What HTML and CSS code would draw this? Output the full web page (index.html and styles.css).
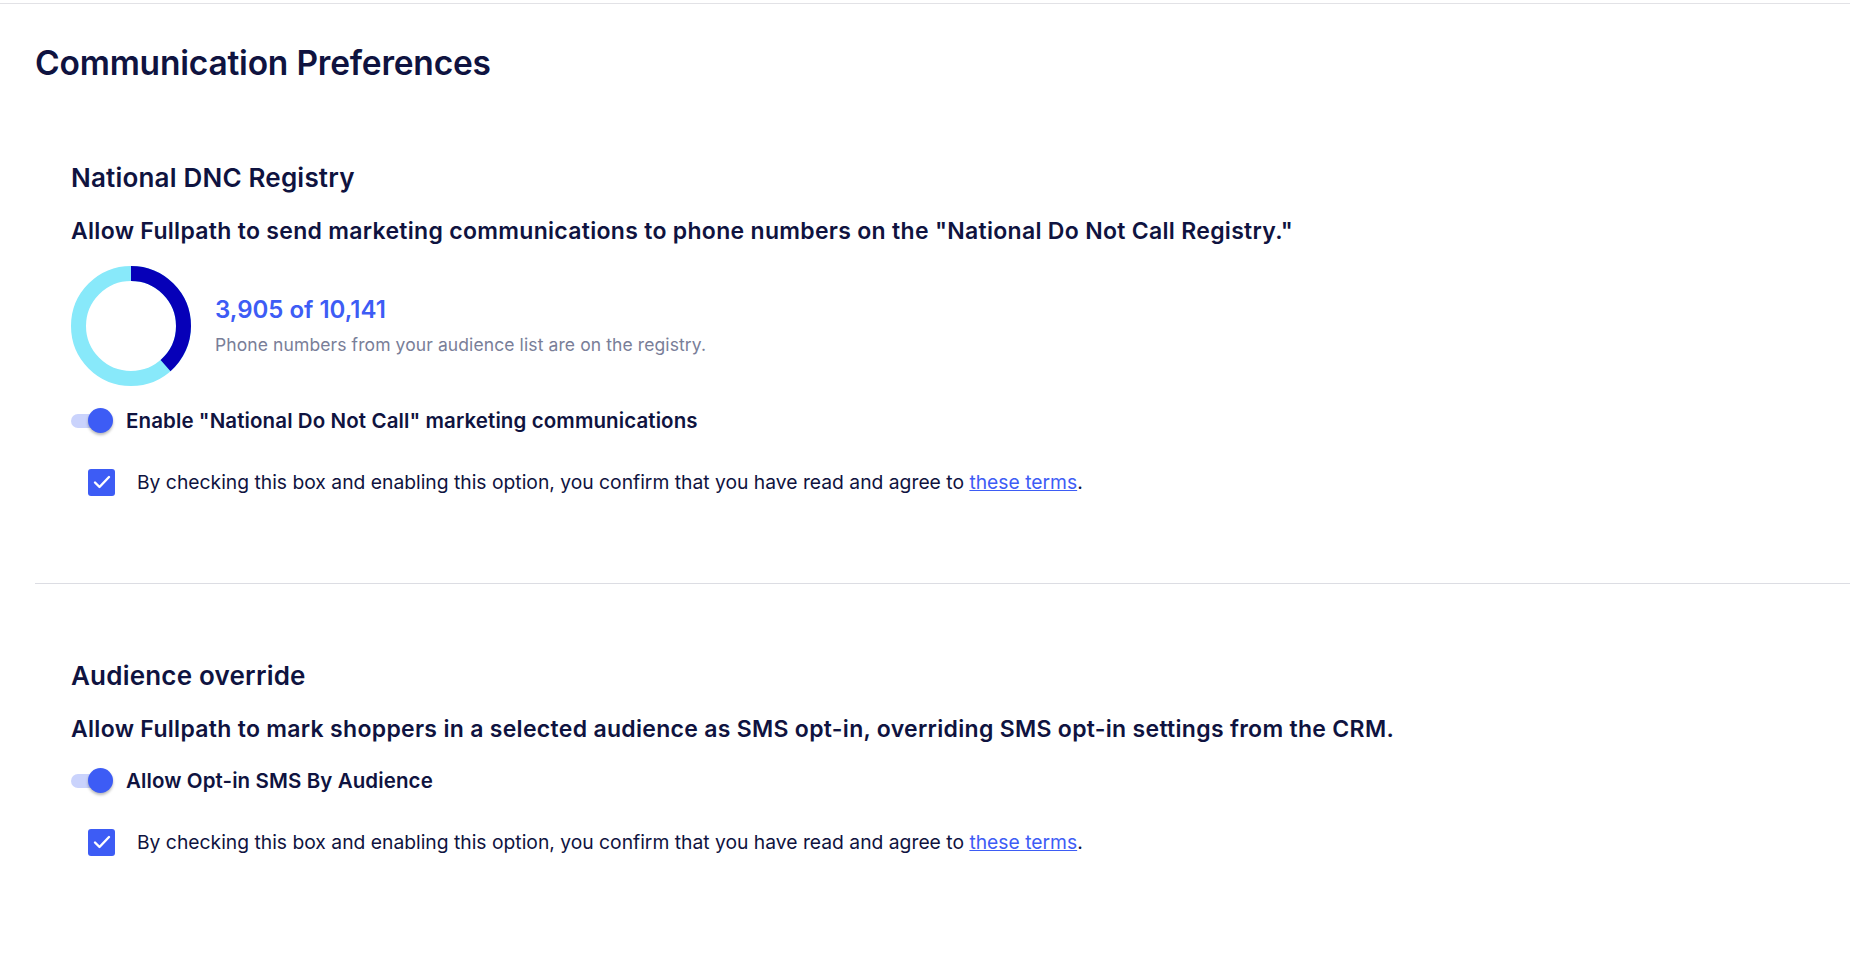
FILE: index.html
```html
<!DOCTYPE html>
<html lang="en">
<head>
  <meta charset="UTF-8" />
  <meta name="viewport" content="width=device-width, initial-scale=1.0"/>
  <title>Communication Preferences</title>
  <link rel="stylesheet" href="styles.css">
</head>
<body>
  <div class="page">
    <h1 class="page-title">Communication Preferences</h1>

    <!-- National DNC -->
    <section class="pref">
      <h2>National DNC Registry</h2>
      <p class="pref-desc">Allow Fullpath to send marketing communications to phone numbers on the "National Do Not Call Registry."</p>

      <div class="registry-stats">
        <svg class="donut" width="120" height="120" viewBox="0 0 120 120">
          <circle cx="60" cy="60" r="52.5" fill="none" stroke="#88e9fa" stroke-width="15"/>
          <circle cx="60" cy="60" r="52.5" fill="none" stroke="#0600b8" stroke-width="15"
                  stroke-dasharray="127 330" transform="rotate(-90 60 60)"/>
        </svg>
        <div>
          <div class="stat-count">3,905 of 10,141</div>
          <div class="stat-note">Phone numbers from your audience list are on the registry.</div>
        </div>
      </div>

      <label class="toggle-row">
        <span class="toggle on"><span class="knob"></span></span>
        Enable "National Do Not Call" marketing communications
      </label>

      <label class="terms-row">
        <span class="checkbox">
          <svg width="20" height="20" viewBox="0 0 20 20"><path d="M3 10.5l4.5 4.5 9.5-10" fill="none" stroke="#fff" stroke-width="2.4" stroke-linecap="round" stroke-linejoin="round"/></svg>
        </span>
        <span>By checking this box and enabling this option, you confirm that you have read and agree to <a href="#">these terms</a>.</span>
      </label>
    </section>

    <hr class="divider">

    <!-- Audience override -->
    <section class="pref">
      <h2>Audience override</h2>
      <p class="pref-desc">Allow Fullpath to mark shoppers in a selected audience as SMS opt-in, overriding SMS opt-in settings from the CRM.</p>

      <label class="toggle-row">
        <span class="toggle on"><span class="knob"></span></span>
        Allow Opt-in SMS By Audience
      </label>

      <label class="terms-row">
        <span class="checkbox">
          <svg width="20" height="20" viewBox="0 0 20 20"><path d="M3 10.5l4.5 4.5 9.5-10" fill="none" stroke="#fff" stroke-width="2.4" stroke-linecap="round" stroke-linejoin="round"/></svg>
        </span>
        <span>By checking this box and enabling this option, you confirm that you have read and agree to <a href="#">these terms</a>.</span>
      </label>
    </section>
  </div>
</body>
</html>
```

FILE: styles.css
```css
body {
  margin: 0;
  background: #fff;
  font-family: Inter, "Noto Sans", sans-serif;
  color: #0f1340;
}

.page {
  margin-top: 3px;
  border-top: 1px solid #e2e2e6;
  padding-left: 35px;
}

.page-title {
  margin: 0 0 4px;
  padding-top: 39px;
  font-size: 33.5px;
  line-height: 40px;
  font-weight: 600;
  letter-spacing: -0.2px;
}

.pref {
  padding: 75px 0 87px 36px;
}

.divider + .pref {
  padding-top: 76px;
}

.pref h2 {
  margin: 0;
  font-size: 26px;
  line-height: 32px;
  font-weight: 600;
  letter-spacing: 0.2px;
}

.pref-desc {
  margin: 22px 0 0;
  font-size: 23px;
  line-height: 30px;
  font-weight: 600;
  letter-spacing: 0.3px;
}

.registry-stats {
  display: flex;
  align-items: center;
  gap: 24px;
  margin-top: 20px;
}

.donut {
  display: block;
}

.stat-count {
  color: #3d5cf5;
  font-size: 24px;
  line-height: 30px;
  font-weight: 600;
}

.stat-note {
  margin-top: 8px;
  color: #797e98;
  font-size: 17.5px;
  line-height: 24px;
  letter-spacing: 0.1px;
}

.toggle-row {
  display: flex;
  align-items: center;
  gap: 13px;
  margin-top: 21px;
  font-size: 20.5px;
  line-height: 28px;
  font-weight: 600;
  letter-spacing: 0.1px;
}

.pref-desc + .toggle-row {
  margin-top: 23px;
}

.toggle {
  position: relative;
  width: 42px;
  height: 26px;
}

.toggle::before {
  content: "";
  position: absolute;
  left: 0;
  top: 6px;
  width: 40px;
  height: 14px;
  border-radius: 7px;
  background: #cad3fc;
}

.toggle .knob {
  position: absolute;
  left: 17px;
  top: 0;
  width: 25px;
  height: 25px;
  border-radius: 50%;
  background: #3d5cf5;
  box-shadow: 0 2px 3px rgba(0, 0, 0, 0.28);
}

.terms-row {
  display: flex;
  align-items: center;
  gap: 22px;
  margin-top: 33px;
  margin-left: 17px;
  font-size: 19.3px;
  line-height: 28px;
}

.checkbox {
  display: flex;
  align-items: center;
  justify-content: center;
  width: 27px;
  height: 27px;
  border-radius: 3px;
  background: #3d5cf5;
}

.terms-row a {
  color: #3d5cf5;
}

.divider {
  margin: 0;
  border: none;
  border-top: 1px solid #dcdde3;
}
```
